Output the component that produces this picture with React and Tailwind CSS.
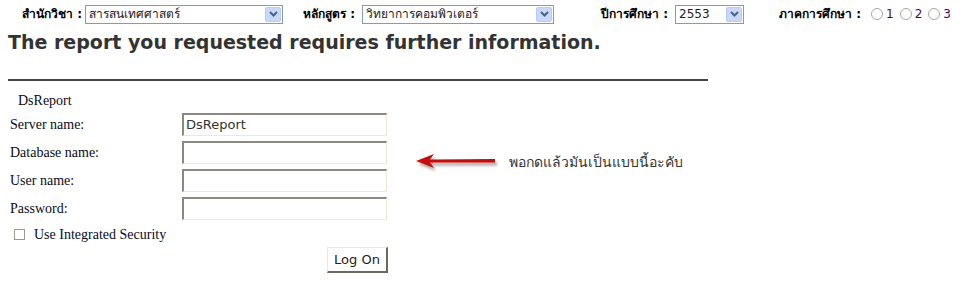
import React from 'react'

const thai = { fontFamily: 'Tahoma, "DejaVu Sans", "Noto Sans", sans-serif' }

function XpSelect({ value, width }) {
  return (
    <div className={`flex h-[19px] items-stretch border border-[#7f9db9] bg-white ${width}`}>
      <span className="flex-1 truncate pl-[3px] text-[12px] leading-[17px] text-[#222]">{value}</span>
      <span className="m-[1px] flex w-[16px] items-center justify-center rounded-[2px] border border-[#b9ccf5] bg-[#c8d8fa]">
        <svg width="9" height="6" viewBox="0 0 9 6">
          <path d="M1 1 L4.5 4.5 L8 1" fill="none" stroke="#4d6185" strokeWidth="2" />
        </svg>
      </span>
    </div>
  )
}

function Radio({ label }) {
  return (
    <span className="flex items-center gap-[3px]">
      <span className="h-[12px] w-[12px] rounded-full border border-[#a8a89c] bg-white" />
      <span className="text-[12px] text-[#3a0a6a]">{label}</span>
    </span>
  )
}

function Field({ label, value }) {
  return (
    <div className="flex h-[28px] items-center">
      <span className="w-[172px] text-[14px] text-[#0a0a20]">{label}</span>
      <span className="h-[23px] w-[205px] border-t-2 border-l-2 border-r border-b border-t-[#8a8a80] border-l-[#8a8a80] border-r-[#ece9d8] border-b-[#ece9d8] bg-white pl-[2px] text-[13px] leading-[20px] text-[#333]" style={thai}>
        {value}
      </span>
    </div>
  )
}

export default function App() {
  return (
    <div className="h-[295px] w-[965px] bg-white" style={{ fontFamily: '"Liberation Serif", "Times New Roman", serif' }}>
      <div className="flex h-[27px] items-center pt-[1px] text-[12px] text-black" style={thai}>
        <span className="ml-[22px] w-[63px] font-bold">สำนักวิชา :</span>
        <XpSelect value="สารสนเทศศาสตร์" width="w-[198px]" />
        <span className="ml-[20px] w-[59px] font-bold">หลักสูตร :</span>
        <XpSelect value="วิทยาการคอมพิวเตอร์" width="w-[192px]" />
        <span className="ml-[47px] w-[74px] font-bold">ปีการศึกษา :</span>
        <XpSelect value="2553" width="w-[69px]" />
        <span className="ml-[35px] w-[92px] font-bold">ภาคการศึกษา :</span>
        <div className="flex gap-[6px]">
          <Radio label="1" />
          <Radio label="2" />
          <Radio label="3" />
        </div>
      </div>

      <h1 className="ml-[8px] mt-[2px] text-[19px] font-bold leading-[26px] text-[#333]" style={{ fontFamily: '"DejaVu Sans", Verdana, sans-serif' }}>
        The report you requested requires further information.
      </h1>

      <div className="ml-[8px] mt-[24px] h-[2px] w-[700px] bg-[#444]" />

      <div className="ml-[10px] mt-[9px] flex">
        <div>
          <div className="ml-[8px] h-[20px] text-[14px] leading-[22px] text-[#0a0a20]">DsReport</div>
          <Field label="Server name:" value="DsReport" />
          <Field label="Database name:" value="" />
          <Field label="User name:" value="" />
          <Field label="Password:" value="" />
          <div className="flex h-[25px] items-center">
            <span className="ml-[4px] h-[11px] w-[11px] border border-[#9a9a90] bg-white" />
            <span className="ml-[9px] text-[14px] text-[#0a0a20]">Use Integrated Security</span>
          </div>
          <div className="flex justify-end">
            <button className="mr-[-1px] h-[26px] w-[61px] border border-t-[#ece9d8] border-l-[#ece9d8] border-r-2 border-b-2 border-r-[#6a6a60] border-b-[#6a6a60] bg-white text-[13px] text-[#222]" style={thai}>
              Log On
            </button>
          </div>
        </div>

        <div className="ml-[28px] mt-[58px] flex h-[28px] items-center">
          <svg width="86" height="22" viewBox="0 0 86 22">
            <defs>
              <filter id="sh" x="-10%" y="-50%" width="130%" height="250%">
                <feDropShadow dx="2" dy="3" stdDeviation="1.6" floodColor="#000" floodOpacity="0.35" />
              </filter>
            </defs>
            <g filter="url(#sh)">
              <path d="M1 10 L19 3 L15 8.5 L80 8 L80 11.5 L15 11.5 L19 17 Z" fill="#c40d0d" />
            </g>
          </svg>
          <span className="ml-[8px] text-[14px] text-[#333]" style={thai}>พอกดแล้วมันเป็นแบบนี้อะคับ</span>
        </div>
      </div>
    </div>
  )
}
